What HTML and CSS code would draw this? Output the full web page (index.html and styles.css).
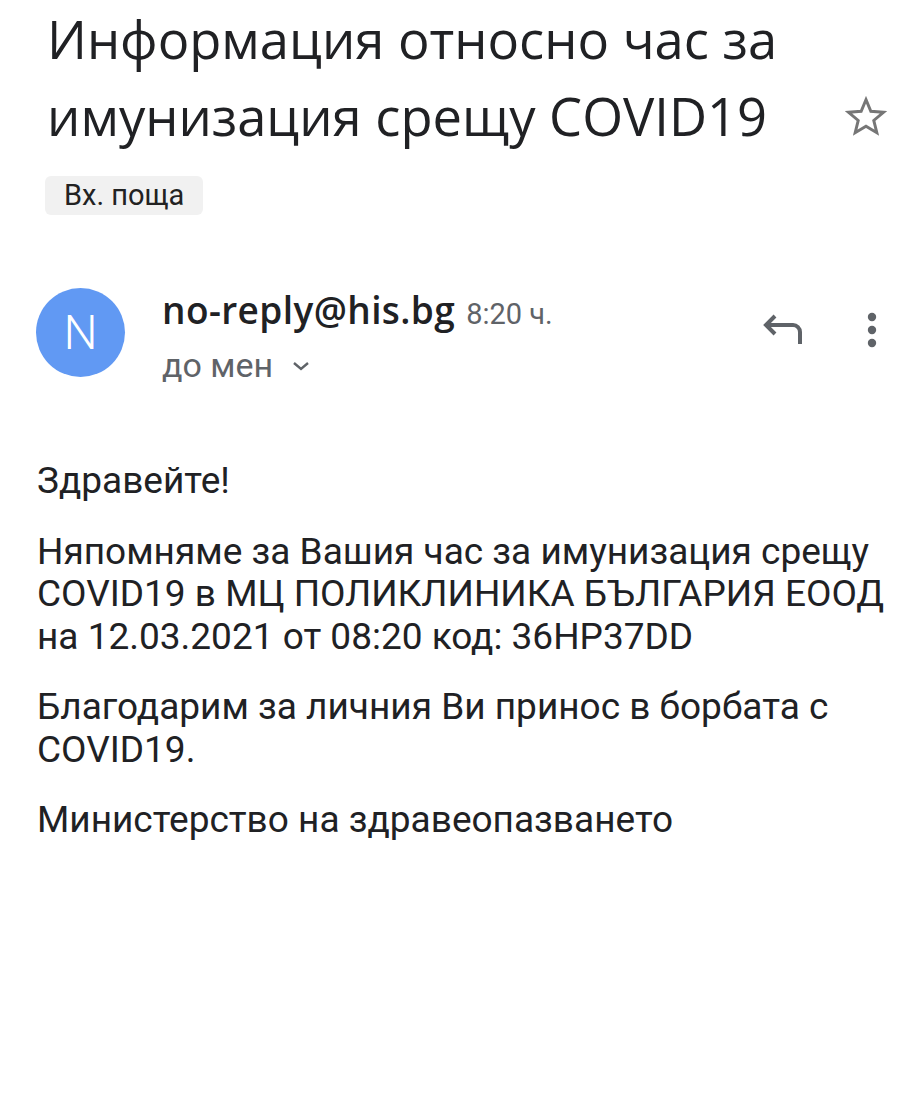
FILE: index.html
```html
<!DOCTYPE html>
<html lang="bg">
<head>
<meta charset="utf-8">
<link rel="stylesheet" href="styles.css">
</head>
<body>
<div class="page">
  <header class="subject">
    <div class="subject-row">
      <h1 class="title">Информация относно час за имунизация срещу COVID19</h1>
      <svg class="star" viewBox="0 0 40 40" width="42" height="42">
        <polygon points="20,3.5 24.6,14.6 36.6,15.5 27.4,23.3 30.3,35 20,28.7 9.7,35 12.6,23.3 3.4,15.5 15.4,14.6" fill="none" stroke="#767676" stroke-width="2.8" stroke-linejoin="miter"/>
      </svg>
    </div>
    <span class="chip">Вх. поща</span>
  </header>

  <section class="sender">
    <div class="avatar">N</div>
    <div class="sender-info">
      <div class="sender-line"><span class="sender-name">no-reply@his.bg</span><span class="time">8:20 ч.</span></div>
      <div class="to-line">до мен
        <svg class="chev" viewBox="0 0 20 12" width="20" height="12"><path d="M3 3 L10 9 L17 3" fill="none" stroke="#5f6368" stroke-width="2.4"/></svg>
      </div>
    </div>
    <div class="actions">
      <svg class="reply" viewBox="0 0 44 36" width="44" height="36">
        <path d="M14 4 L5 13 L14 22 M5 13 H32 a7 7 0 0 1 7 7 V32" fill="none" stroke="#5f6368" stroke-width="4" stroke-linejoin="miter"/>
      </svg>
      <svg class="dots" viewBox="0 0 10 36" width="10" height="36">
        <circle cx="5" cy="5" r="4.2" fill="#5f6368"/>
        <circle cx="5" cy="18" r="4.2" fill="#5f6368"/>
        <circle cx="5" cy="31" r="4.2" fill="#5f6368"/>
      </svg>
    </div>
  </section>

  <main class="body">
    <p>Здравейте!</p>
    <p>Няпомняме за Вашия час за имунизация срещу COVID19 в МЦ ПОЛИКЛИНИКА БЪЛГАРИЯ ЕООД на 12.03.2021 от 08:20 код: 36HP37DD</p>
    <p>Благодарим за личния Ви принос в борбата с COVID19.</p>
    <p>Министерство на здравеопазването</p>
  </main>
</div>
</body>
</html>
```

FILE: styles.css
```css
* { box-sizing: border-box; }
html, body { margin: 0; padding: 0; background: #fff; }
body { font-family: Roboto, "Noto Sans", sans-serif; color: #202124; }
.page { width: 921px; }

.subject { padding: 0 0 0 47px; }
.subject-row { display: flex; align-items: flex-end; }
.title {
  margin: 0;
  width: 790px;
  font-family: "Open Sans", Roboto, sans-serif;
  font-weight: 400;
  font-size: 52.5px;
  line-height: 77px;
  color: #202124;
}
.star { margin: 0 0 16px 8px; flex: none; }
.chip {
  display: inline-block;
  margin: 22px 0 0 -2px;
  padding: 0 19px;
  height: 39px;
  line-height: 39px;
  background: #f1f1f1;
  border-radius: 6px;
  font-size: 29px;
  color: #222;
}

.sender {
  display: flex;
  align-items: flex-start;
  padding: 73px 0 0 36px;
}
.avatar {
  width: 89px; height: 89px;
  border-radius: 50%;
  background: #6199f3;
  color: #fff;
  font-size: 48px;
  font-weight: 300;
  display: flex; align-items: center; justify-content: center;
  flex: none;
}
.sender-info { margin-left: 37px; flex: 1; }
.sender-line { display: flex; align-items: baseline; line-height: 44px; }
.sender-name { font-family: "Open Sans", Roboto, sans-serif; font-size: 37px; font-weight: 600; color: #202124; letter-spacing: 0.4px; }
.time { font-size: 29px; color: #5f6368; margin-left: 11px; }
.to-line { font-size: 34px; line-height: 40px; color: #5f6368; margin-top: 9px; display: flex; align-items: center; }
.chev { margin-left: 18px; margin-top: 2px; }
.actions { display: flex; align-items: center; gap: 62px; padding: 24px 44px 0 0; }

.body { padding: 75px 0 0 37px; }
.body p {
  margin: 0 0 28px;
  font-size: 37px;
  line-height: 42.5px;
  width: 860px;
}
```
